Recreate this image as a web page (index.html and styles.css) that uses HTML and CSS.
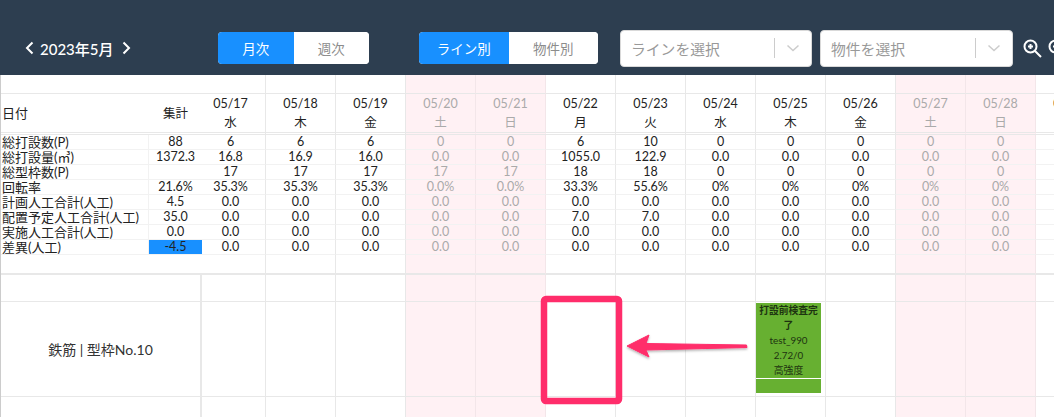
FILE: index.html
```html
<!DOCTYPE html>
<html lang="ja">
<head>
    <meta charset="UTF-8">
    <title>生産計画</title>
    <link rel="stylesheet" href="styles.css">
</head>
<body>
<div class="page">
    <header class="topbar">
        <div class="month-nav">
            <svg class="chevron" width="9" height="14" viewBox="0 0 9 14"><path d="M7.500 1.500 2 7l5.500 5.500"/></svg>
            <span class="month-label">2023年5月</span>
            <svg class="chevron" width="9" height="14" viewBox="0 0 9 14"><path d="M1.500 1.500 7 7l-5.500 5.500"/></svg>
        </div>
        <div class="toggle toggle-period">
            <button class="toggle-btn active">月次</button>
            <button class="toggle-btn">週次</button>
        </div>
        <div class="toggle toggle-group">
            <button class="toggle-btn active">ライン別</button>
            <button class="toggle-btn">物件別</button>
        </div>
        <div class="select select-line">
            <span class="select-text">ラインを選択</span>
            <span class="select-arrow"><svg width="14" height="8" viewBox="0 0 14 8"><path d="M1.500 1.500 7 6.500l5.500-5"/></svg></span>
        </div>
        <div class="select select-site">
            <span class="select-text">物件を選択</span>
            <span class="select-arrow"><svg width="14" height="8" viewBox="0 0 14 8"><path d="M1.500 1.500 7 6.500l5.500-5"/></svg></span>
        </div>
        <svg class="zoom-icon" width="19" height="19" viewBox="0 0 19 19"><circle cx="7.500" cy="7.500" r="6"/><path d="M12 12l6 6M7.500 5v5M5 7.500h5"/></svg>
        <svg class="zoom-icon zoom-out" width="19" height="19" viewBox="0 0 19 19"><circle cx="7.500" cy="7.500" r="6"/><path d="M12 12l6 6M5 7.500h5"/></svg>
    </header>

    <table class="schedule">
        <colgroup>
            <col class="c-label"><col class="c-sum"><col class="c-first">
            <col class="c-day"><col class="c-day"><col class="c-day"><col class="c-day"><col class="c-day"><col class="c-day"><col class="c-day"><col class="c-day"><col class="c-day"><col class="c-day"><col class="c-day"><col class="c-day">
        </colgroup>
        <tr class="row-blank">
            <td colspan="3" class="first"></td><td></td><td></td><td class="off"></td><td class="off"></td><td></td><td></td><td></td><td></td><td></td><td class="off"></td><td class="off"></td><td></td>
        </tr>
        <tr class="row-dates">
            <td class="label plain">日付</td><td class="plain">集計</td><td class="first">05/17<br>水</td><td>05/18<br>木</td><td>05/19<br>金</td><td class="off">05/20<br>土</td><td class="off">05/21<br>日</td><td>05/22<br>月</td><td>05/23<br>火</td><td>05/24<br>水</td><td>05/25<br>木</td><td>05/26<br>金</td><td class="off">05/27<br>土</td><td class="off">05/28<br>日</td><td>05/29<br>月</td>
        </tr>
        <tr class="row-data">
            <td class="label">総打設数(P)</td><td class="sum">88</td><td class="first">6</td><td>6</td><td>6</td><td class="off">0</td><td class="off">0</td><td>6</td><td>10</td><td>0</td><td>0</td><td>0</td><td class="off">0</td><td class="off">0</td><td></td>
        </tr>
        <tr class="row-data">
            <td class="label">総打設量(㎥)</td><td class="sum">1372.3</td><td class="first">16.8</td><td>16.9</td><td>16.0</td><td class="off">0.0</td><td class="off">0.0</td><td>1055.0</td><td>122.9</td><td>0.0</td><td>0.0</td><td>0.0</td><td class="off">0.0</td><td class="off">0.0</td><td></td>
        </tr>
        <tr class="row-data">
            <td class="label">総型枠数(P)</td><td class="sum"></td><td class="first">17</td><td>17</td><td>17</td><td class="off">17</td><td class="off">17</td><td>18</td><td>18</td><td>0</td><td>0</td><td>0</td><td class="off">0</td><td class="off">0</td><td></td>
        </tr>
        <tr class="row-data">
            <td class="label">回転率</td><td class="sum">21.6%</td><td class="first">35.3%</td><td>35.3%</td><td>35.3%</td><td class="off">0.0%</td><td class="off">0.0%</td><td>33.3%</td><td>55.6%</td><td>0%</td><td>0%</td><td>0%</td><td class="off">0%</td><td class="off">0%</td><td></td>
        </tr>
        <tr class="row-data">
            <td class="label">計画人工合計(人工)</td><td class="sum">4.5</td><td class="first">0.0</td><td>0.0</td><td>0.0</td><td class="off">0.0</td><td class="off">0.0</td><td>0.0</td><td>0.0</td><td>0.0</td><td>0.0</td><td>0.0</td><td class="off">0.0</td><td class="off">0.0</td><td></td>
        </tr>
        <tr class="row-data">
            <td class="label">配置予定人工合計(人工)</td><td class="sum">35.0</td><td class="first">0.0</td><td>0.0</td><td>0.0</td><td class="off">0.0</td><td class="off">0.0</td><td>7.0</td><td>7.0</td><td>0.0</td><td>0.0</td><td>0.0</td><td class="off">0.0</td><td class="off">0.0</td><td></td>
        </tr>
        <tr class="row-data">
            <td class="label">実施人工合計(人工)</td><td class="sum">0.0</td><td class="first">0.0</td><td>0.0</td><td>0.0</td><td class="off">0.0</td><td class="off">0.0</td><td>0.0</td><td>0.0</td><td>0.0</td><td>0.0</td><td>0.0</td><td class="off">0.0</td><td class="off">0.0</td><td></td>
        </tr>
        <tr class="row-data">
            <td class="label">差異(人工)</td><td class="sum diff">-4.5</td><td class="first">0.0</td><td>0.0</td><td>0.0</td><td class="off">0.0</td><td class="off">0.0</td><td>0.0</td><td>0.0</td><td>0.0</td><td>0.0</td><td>0.0</td><td class="off">0.0</td><td class="off">0.0</td><td></td>
        </tr>
        <tr class="row-gap">
            <td colspan="3" class="first"></td><td></td><td></td><td class="off"></td><td class="off"></td><td></td><td></td><td></td><td></td><td></td><td class="off"></td><td class="off"></td><td></td>
        </tr>
        <tr class="row-lane-head">
            <td colspan="2" class="lane-name"></td><td></td><td></td><td></td><td class="off"></td><td class="off"></td><td></td><td></td><td></td><td></td><td></td><td class="off"></td><td class="off"></td><td></td>
        </tr>
        <tr class="row-lane">
            <td colspan="2" class="lane-name">鉄筋 | 型枠No.10</td><td></td><td></td><td></td><td class="off"></td><td class="off"></td><td></td><td></td><td></td>
            <td class="slot">
                <div class="card">
                    <div class="card-body">
                        <b>打設前検査完了</b>
                        <div>test_990</div>
                        <div>2.72/0</div>
                        <div>高強度</div>
                    </div>
                    <div class="card-foot"></div>
                </div>
            </td>
            <td></td><td class="off"></td><td class="off"></td><td></td>
        </tr>
        <tr class="row-lane-end">
            <td colspan="2" class="lane-name"></td><td></td><td></td><td></td><td class="off"></td><td class="off"></td><td></td><td></td><td></td><td></td><td></td><td class="off"></td><td class="off"></td><td></td>
        </tr>
    </table>

    <!-- annotation drawn on top of the screenshot -->
    <svg class="markup" width="1054" height="417" viewBox="0 0 1054 417">
        <defs>
            <filter id="soft" x="-10%" y="-30%" width="120%" height="170%">
                <feDropShadow dx="0" dy="1.500" stdDeviation="1.200" flood-color="#000" flood-opacity="0.3"/>
            </filter>
        </defs>
        <rect class="markup-box" x="544" y="299" width="75" height="102" rx="2"/>
        <path class="markup-arrow" filter="url(#soft)" d="M627 346 649 335 646 343.500 746.500 345 747 347.500 646 350 649 357Z"/>
    </svg>
</div>
</body>
</html>
```

FILE: styles.css
```css
* {
    box-sizing: border-box;
}
body {
    margin: 0;
    font-family: Lato, "Noto Sans CJK JP", sans-serif;
    color: #222;
    background: #fff;
}
.page {
    position: relative;
    width: 1054px;
    height: 417px;
    overflow: hidden;
}

/* top bar */
.topbar {
    display: flex;
    align-items: center;
    height: 75px;
    padding: 21px 0 0 25px;
    background: #2d3e50;
}
.month-nav {
    display: flex;
    align-items: center;
    flex-shrink: 0;
    width: 106px;
    gap: 6px;
    color: #fff;
}
.month-label {
    width: 76px;
    font-size: 15px;
    font-weight: 500;
    white-space: nowrap;
}
.chevron {
    fill: none;
    stroke: #fff;
    stroke-width: 2;
    flex-shrink: 0;
}
.toggle {
    display: flex;
    flex-shrink: 0;
    height: 32px;
    border-radius: 4px;
    overflow: hidden;
    background: #fff;
}
.toggle-period {
    margin-left: 87px;
    width: 151px;
}
.toggle-group {
    margin-left: 50px;
    width: 179px;
}
.toggle-btn {
    flex: 1;
    padding: 0;
    border: 0;
    background: #fff;
    color: #8c8c8c;
    font-family: inherit;
    font-size: 13.500px;
}
.toggle-btn.active {
    background: #1890ff;
    color: #fff;
}
.select {
    display: flex;
    align-items: center;
    flex-shrink: 0;
    height: 37px;
    padding-left: 10px;
    background: #fff;
    border: 1px solid #d9d9d9;
    border-radius: 4px;
    color: #999;
    font-size: 14.800px;
}
.select-line {
    width: 192px;
    margin-left: 22px;
}
.select-site {
    width: 193px;
    margin-left: 8px;
}
.select-text {
    flex: 1;
}
.select-arrow {
    display: flex;
    align-items: center;
    justify-content: center;
    width: 37px;
    height: 20px;
    border-left: 1px solid #ccc;
}
.select-arrow svg {
    fill: none;
    stroke: #ccc;
    stroke-width: 1.500;
}
.zoom-icon {
    flex-shrink: 0;
    margin-left: 10px;
    fill: none;
    stroke: #fff;
    stroke-width: 2;
}
.zoom-out {
    margin-left: 6px;
}

/* schedule table */
.schedule {
    width: 1105px;
    table-layout: fixed;
    border-collapse: separate;
    border-spacing: 0;
    border-left: 1px solid #ccc;
    font-size: 12.500px;
    text-align: center;
}
.c-label { width: 148px; }
.c-sum { width: 53px; }
.c-first { width: 64px; }
.c-day { width: 70px; }

.schedule td {
    padding: 0;
    border-right: 1px solid #e8e8e8;
    border-bottom: 1px solid #e8e8e8;
    vertical-align: middle;
    white-space: nowrap;
    overflow: hidden;
}
.schedule .off {
    background: #fff1f4;
    color: #aaa;
    border-right-color: #f3e6e9;
}
.schedule .first {
    padding-right: 6px;
}
.schedule .plain {
    border-right: 0;
}
.schedule .label {
    padding-left: 1px;
    font-size: 13px;
    text-align: left;
    border-right-color: #f2f2f2;
}
.schedule .sum {
    border-right: 0;
}
.row-blank td {
    height: 19px;
}
.row-dates td {
    height: 41px;
    line-height: 19px;
    border-bottom: 3px double #e8e8e8;
}
.row-data td {
    height: 15px;
    line-height: 14px;
    border-bottom-color: #f2f2f2;
}
.schedule .diff {
    background: #1890ff;
}
.row-gap td {
    height: 20px;
    border-bottom: 2px solid #e8e8e8;
}
.row-lane-head td {
    height: 27px;
}
.row-lane td {
    height: 95px;
}
.row-lane-end td {
    height: 21px;
    border-bottom: 0;
}
.row-lane-head td:first-child,
.row-lane td:first-child,
.row-lane-end td:first-child {
    border-right-width: 2px;
}
.lane-name {
    font-size: 14px;
    color: #333;
}

/* event card */
.schedule .slot {
    padding: 1px 4px 2px 0;
    vertical-align: top;
}
.card {
    background: #67b031;
    font-size: 9.800px;
    line-height: 15px;
    color: #1d3310;
    white-space: normal;
}
.card-body {
    border-bottom: 1px solid #fff;
}
.card b {
    display: block;
}
.card-foot {
    height: 14px;
}

/* markup on top */
.markup {
    position: absolute;
    top: 0;
    left: 0;
    pointer-events: none;
}
.markup-box {
    fill: none;
    stroke: #ff2d6b;
    stroke-width: 6.500;
}
.markup-arrow {
    fill: #ff2d6b;
    stroke: #ff2d6b;
    stroke-width: 1;
    stroke-linejoin: round;
}
```
